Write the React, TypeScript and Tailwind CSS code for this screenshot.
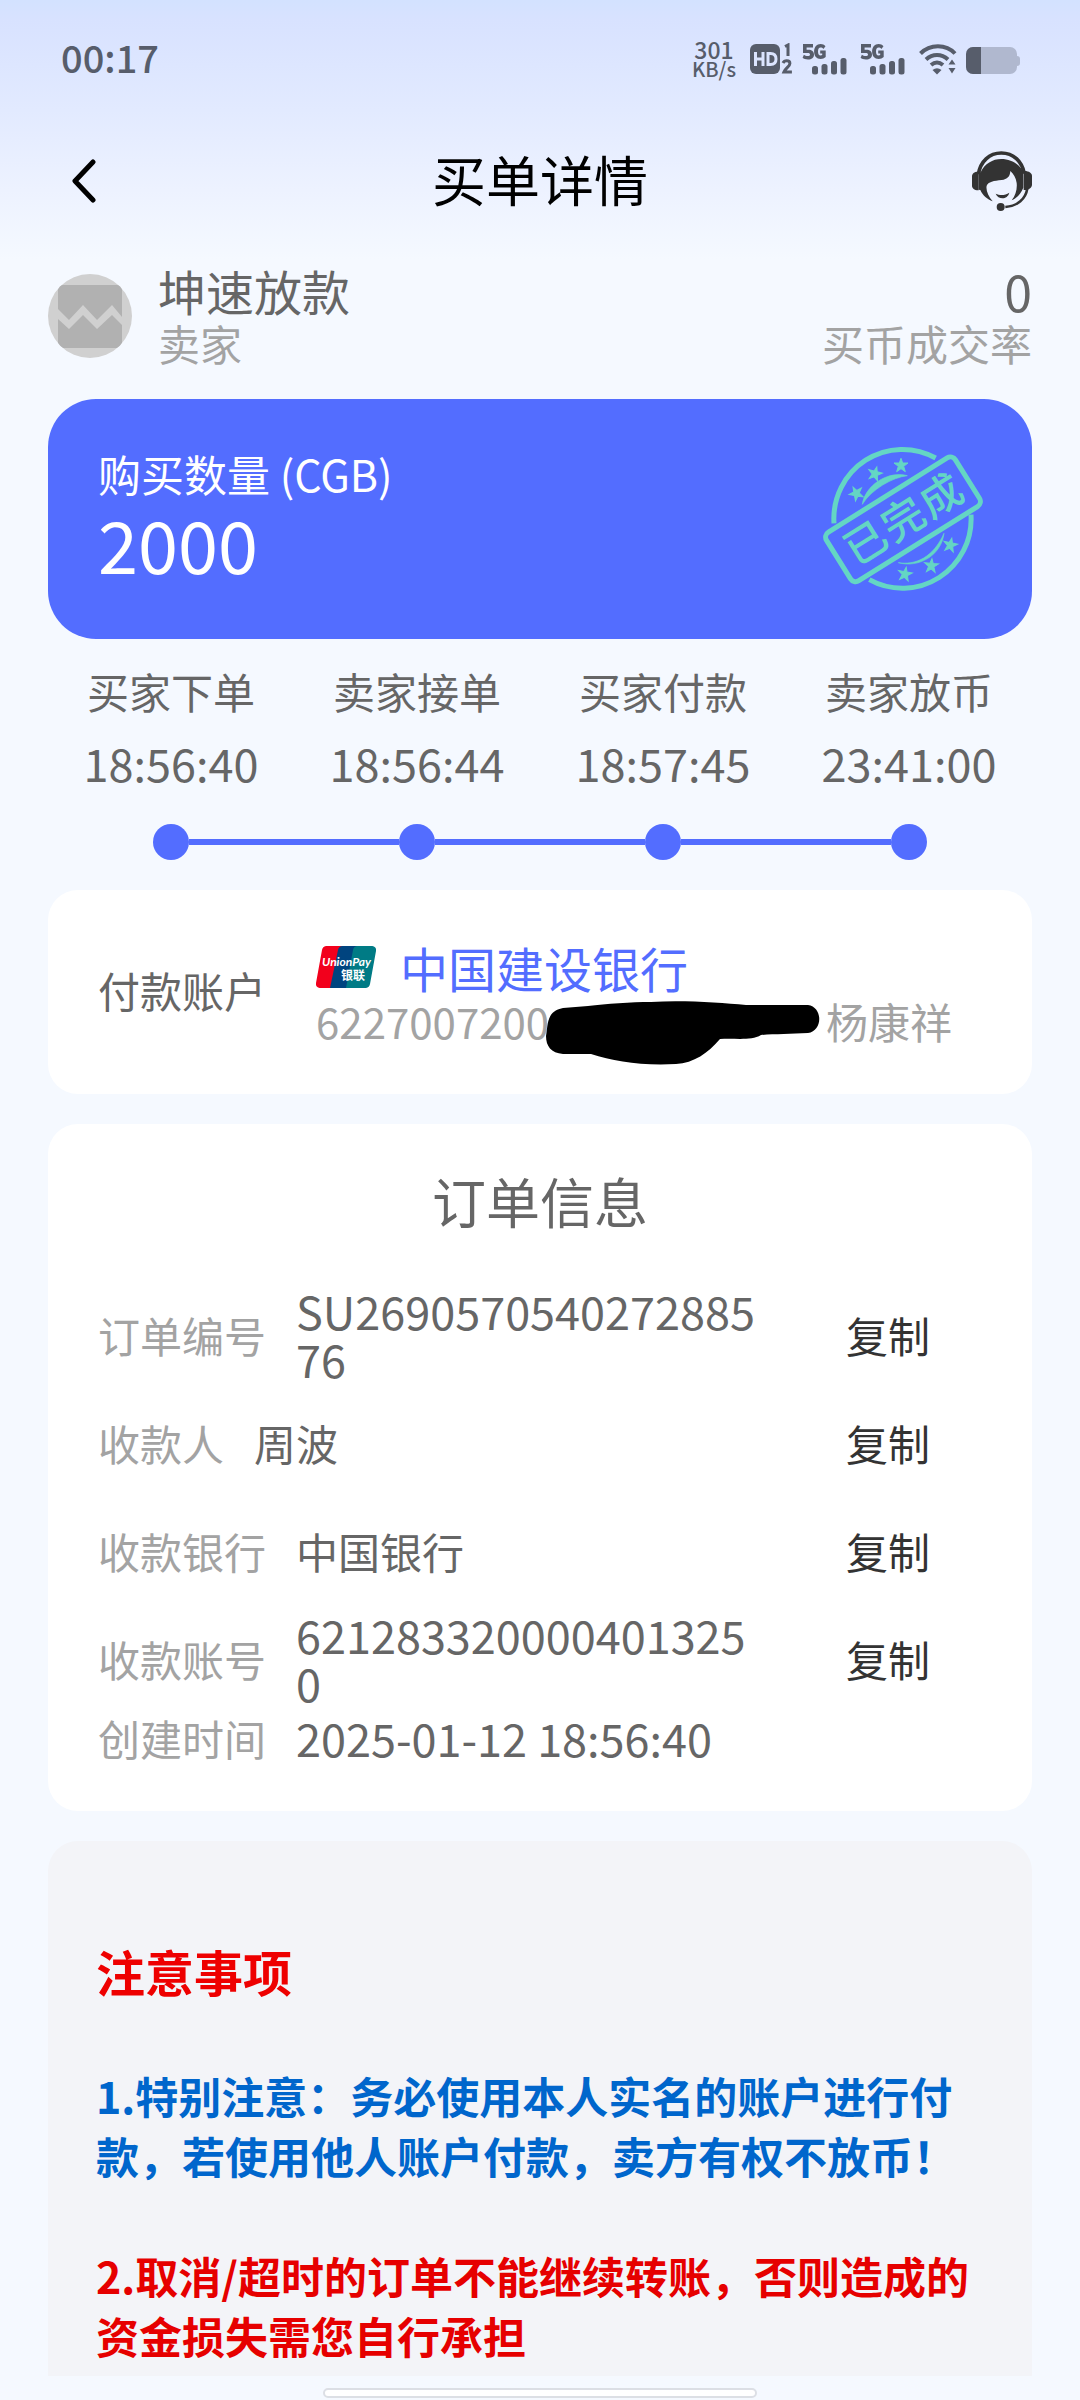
import React from "react";

const steps = [
  { label: "买家下单", time: "18:56:40" },
  { label: "卖家接单", time: "18:56:44" },
  { label: "买家付款", time: "18:57:45" },
  { label: "卖家放币", time: "23:41:00" },
];

const orderRows = [
  { label: "订单编号", value: "SU269057054027288576", numeric: true },
  { label: "收款人", value: "周波", numeric: false },
  { label: "收款银行", value: "中国银行", numeric: false },
  { label: "收款账号", value: "6212833200004013250", numeric: true },
];

function Signal() {
  return (
    <svg viewBox="0 0 46 32" className="h-8 w-[46px]" fill="#575d6b" aria-hidden="true">
      <path d="M1 1h10v3.4H4.6v2.4h1.8c3.4 0 5.6 1.7 5.6 4.7 0 3.2-2.3 5-6 5-2.5 0-4.3-.7-5.4-1.7l1.3-3.1c1 .8 2.3 1.3 3.8 1.3 1.4 0 2.3-.5 2.3-1.6 0-1-.8-1.5-2.3-1.5H1z" />
      <path d="M23.5 3.2 21.4 6c-.8-1-1.7-1.4-2.8-1.4-1.7 0-2.6 1.6-2.6 4s.9 4 2.5 4c.8 0 1.3-.2 1.7-.5v-1.5h-2V7.5h5.500v6.600c-1.300 1.300-3.100 2-5.100 2-4 0-6.500-2.900-6.500-7.500S14.700 1 18.600 1c2 0 3.700.7 4.900 2.200z" />
      <rect x="10" y="23" width="6" height="8.500" rx="2.500" />
      <rect x="19.500" y="21" width="6" height="10.500" rx="2.500" />
      <rect x="29" y="18" width="6" height="13.500" rx="2.500" />
      <rect x="38.500" y="15" width="6" height="16.500" rx="2.500" />
    </svg>
  );
}

function StatusBar() {
  return (
    <div className="flex h-[118px] items-center justify-between pl-[61px] pr-[60px] text-[#575d6b]">
      <span className="pb-1 text-[38px] leading-[48px] font-medium">00:17</span>
      <div className="flex items-center">
        <div className="mr-[14px] flex flex-col items-center font-medium">
          <span className="text-[23px] leading-[20px]">301</span>
          <span className="text-[20px] leading-[20px]">KB/s</span>
        </div>
        <svg viewBox="0 0 44 32" className="mr-2 h-8 w-11" aria-hidden="true">
          <rect x="0" y="1" width="30" height="30" rx="6" fill="#575d6b" />
          <path d="M5.500 9v14M13 9v14M5.500 16H13M18 10.500v11h2.500c4 0 5.500-2 5.500-5.500s-1.500-5.500-5.500-5.500z" fill="none" stroke="#dce5ff" strokeWidth="3" />
          <path d="M35 3.500l3-1.500v11M33 20c.8-1.700 2-2.300 3.700-2.300 2 0 3.200 1 3.200 2.700 0 3-4.500 4.800-6 8.600h8" fill="none" stroke="#575d6b" strokeWidth="3" />
        </svg>
        <Signal />
        <span className="w-3" />
        <Signal />
        <svg viewBox="0 0 40 32" className="ml-3 h-8 w-10" fill="none" stroke="#575d6b" strokeWidth="4" aria-hidden="true">
          <path d="M2.500 10.500C12 .8 28 .8 37 10.500M8 16.500c6.500-6 15.500-6 22 0M13 22c4-3.400 8-3.400 12 0" />
          <path d="M14.500 27c3-2.200 6-2.200 9 0L19 31.500z" fill="#575d6b" stroke="none" />
          <path d="M30.500 21.500 34 16.500l3.500 5zM30.500 25h7L34 30.500z" fill="#575d6b" stroke="none" />
        </svg>
        <svg viewBox="0 0 54 28" className="mt-[3px] ml-2 h-7 w-[54px]" aria-hidden="true">
          <path d="M7 0h37a7 7 0 0 1 7 7v2a3 3 0 0 1 3 3v4a3 3 0 0 1-3 3v1a7 7 0 0 1-7 7H7a7 7 0 0 1-7-7V7a7 7 0 0 1 7-7z" fill="#b0b8cf" />
          <path d="M15 0v27H7a7 7 0 0 1-7-7V7a7 7 0 0 1 7-7z" fill="#575d6b" />
        </svg>
      </div>
    </div>
  );
}

function Headset() {
  return (
    <svg viewBox="0 0 180 180" className="size-[60px]" fill="#333333" aria-hidden="true">
      <path d="M19 70C25 31 52 6 88 6s62 25 69 62" fill="none" stroke="#333333" strokeWidth="11" />
      <path d="M20 62v56C8 119 0 112 0 104V75c0-8 8-14 20-13z" />
      <path d="M155 60c15-1 25 6 25 15v26c0 9-9 16-25 16z" />
      <path d="M20 116V64h6C38 38 62 24 88 24c30 0 54 16 66 38v48c-9 20-20 32-35 38 12-14 17-34 15-52-2-16-10-28-19-36-1 17-9 25-26 27-23 2-41 6-45 17-3 14 5 32 18 47-16-6-30-18-37-34z" />
      <path d="M71 128c12 6 28 6 41-3-5 21-33 22-41 3z" />
      <path d="M166 112c-5 32-29 53-66 56" fill="none" stroke="#333333" strokeWidth="8" />
      <circle cx="86" cy="168" r="12" />
    </svg>
  );
}

function AvatarPlaceholder() {
  return (
    <svg viewBox="0 0 84 84" className="size-[84px] shrink-0 rounded-full bg-[#d0d0d0]" fill="#b1b1b1" role="img" aria-label="卖家头像">
      <path d="M15 11h54a5 5 0 0 1 5 5v27L64 31 49 46 35 31 21 46 10 35V16a5 5 0 0 1 5-5z" />
      <path d="M10 45l11 10 14-14 14 14 15-14 10 10v18a5 5 0 0 1-5 5H15a5 5 0 0 1-5-5z" />
    </svg>
  );
}

const stars = [
  [229, 760, -28],
  [285, 701, 15],
  [363, 676, 0],
  [375, 1002, 10],
  [454, 977, 5],
  [511, 915, 12],
];

function Stamp() {
  return (
    <svg viewBox="120 615 498 444" className="h-[148px] w-[166px]" fill="none" stroke="#64d6c4" aria-label="已完成">
      <path d="M162 850A206 208 0 0 1 467 654M573 824A206 208 0 0 1 268 1019" strokeWidth="15" />
      <g transform="rotate(-32 369 838)">
        <rect x="141" y="752" width="456" height="172" rx="18" strokeWidth="15" />
        <text x="174 307 440" y="884" fontSize="126" fill="#64d6c4" stroke="none" className="font-medium">
          已完成
        </text>
      </g>
      <path d="M247 793c8-56 76-102 135-86-44 5-108 41-135 86zM355 968c50 8 104-14 137-88-8 66-75 105-137 88z" fill="#64d6c4" strokeWidth="2" />
      {stars.map(([x, y, r]) => (
        <path
          key={x}
          transform={`translate(${x} ${y}) rotate(${r})`}
          d="M0-21 5-7h16L8 3l5 16L0 10l-13 9 5-16L-21-7h16z"
          fill="#64d6c4"
          strokeWidth="3"
        />
      ))}
    </svg>
  );
}

function UnionPay() {
  return (
    <svg viewBox="0 0 60 42" className="h-[42px] w-[60px]" role="img" aria-label="UnionPay 银联">
      <path d="M10 0h16l-9 42H4a4 4 0 0 1-4-5L6 4a5 5 0 0 1 4-4z" fill="#f2001c" />
      <path d="M26 0h17l-9 42H14l8-38a5 5 0 0 1 4-4z" fill="#00447f" />
      <path d="M41 0h15a4 4 0 0 1 4 5l-6 33a5 5 0 0 1-4 4H30l7-38a5 5 0 0 1 4-4z" fill="#007b85" />
      <text x="6" y="20" fontSize="12" fill="#fff" className="font-['Lato'] font-bold italic">UnionPay</text>
      <text x="25" y="34" fontSize="12" fill="#fff" className="font-bold">银联</text>
    </svg>
  );
}

function Redaction() {
  return (
    <svg viewBox="0 0 274 64" className="absolute top-[5px] left-[230px] h-16 w-[274px]" aria-hidden="true">
      <path d="M42 5 C60 3 85 1 105 1 C140-1 175 2 200 4 L262 4 C277 6 277 30 262 32 C245 33 228 33 215 34 C205 40 190 37 174 38 C162 52 148 62 130 63 C95 65 68 60 45 53 L17 53 C5 52 0 45 0 35 C2 25 0 10 17 7 Z" fill="#000" />
    </svg>
  );
}

export default function App() {
  return (
    <div className="flex min-h-screen flex-col bg-[#f5f9ff] bg-[linear-gradient(180deg,#d3e2ff_0px,#d8e2ff_20px,#e2eaff_110px,#edf2ff_190px,#f5f9ff_260px)] font-['Noto_Sans_CJK_SC',sans-serif] text-[42px] leading-[50px] text-[#666666]">
      <StatusBar />

      <header className="grid h-[126px] grid-cols-[1fr_auto_1fr] items-center px-12 text-black">
        <button type="button" aria-label="返回" className="flex size-[72px] items-center justify-center">
          <svg viewBox="0 0 24 44" className="h-11 w-6" fill="none" stroke="#000" strokeWidth="5" strokeLinecap="round" strokeLinejoin="round" aria-hidden="true">
            <path d="M21 3 3 22l18 19" />
          </svg>
        </button>
        <h1 className="pb-1 text-[54px] leading-[64px]">买单详情</h1>
        <button type="button" aria-label="客服" className="justify-self-end">
          <Headset />
        </button>
      </header>

      <main className="flex flex-1 flex-col px-12">
        <section className="mt-4 flex items-center">
          <AvatarPlaceholder />
          <div className="ml-[26px] pt-[2px] pb-1">
            <p className="text-[48px] leading-[56px]">坤速放款</p>
            <p className="text-[#a3a3a3]">卖家</p>
          </div>
          <div className="ml-auto pt-[2px] pb-1 text-right">
            <p className="text-[50px] leading-[56px]">0</p>
            <p className="text-[#a3a3a3]">买币成交率</p>
          </div>
        </section>

        <section className="mt-[27px] flex items-center justify-between rounded-[48px] bg-[#536dff] py-[46px] pr-[46px] pl-[50px] text-white">
          <div className="pb-2">
            <p className="text-[43px] leading-[56px]">购买数量 (CGB)</p>
            <p className="text-[72px] leading-[84px]">2000</p>
          </div>
          <Stamp />
        </section>

        <ol className="mt-[27px] grid grid-cols-4">
          {steps.map((step, i) => (
            <li key={step.label} className="flex flex-col items-center">
              <span>{step.label}</span>
              <time className="mt-[22px] text-[45px]">{step.time}</time>
              <div className="mt-9 flex w-full items-center">
                <span className={i === 0 ? "h-[6px] flex-1" : "h-[6px] flex-1 bg-[#536dff]"} />
                <span className="size-9 rounded-full bg-[#536dff]" />
                <span className={i === 3 ? "h-[6px] flex-1" : "h-[6px] flex-1 bg-[#536dff]"} />
              </div>
            </li>
          ))}
        </ol>

        <section className="mt-[30px] flex items-center rounded-[30px] bg-white px-[50px] py-[48px]">
          <h2 className="pb-1">付款账户</h2>
          <div className="ml-[50px]">
            <div className="flex items-center">
              <UnionPay />
              <span className="ml-6 text-[48px] leading-[58px] text-[#536dff]">中国建设银行</span>
            </div>
            <div className="relative flex text-[#a3a3a3]">
              <span className="w-[510px]">6227007200</span>
              <span>杨康祥</span>
              <Redaction />
            </div>
          </div>
        </section>

        <section className="mt-[30px] rounded-[30px] bg-white px-[50px] pt-[45px] pb-12">
          <h2 className="text-center text-[54px] leading-[64px]">订单信息</h2>
          <dl className="mt-12">
            {orderRows.map((row) => (
              <div key={row.label} className="flex h-[108px] items-center">
                <dt className="shrink-0 text-[#a3a3a3]">{row.label}</dt>
                <dd className="ml-[30px] flex flex-1 items-center gap-8">
                  <span className={row.numeric ? "flex-1 text-[45px] leading-[48px] break-all" : "flex-1"}>{row.value}</span>
                  <button type="button" aria-label={`复制${row.label}`} className="w-[188px] text-[#333333]">
                    复制
                  </button>
                </dd>
              </div>
            ))}
            <div className="flex items-center">
              <dt className="text-[#a3a3a3]">创建时间</dt>
              <dd className="ml-[30px] text-[45px]">2025-01-12 18:56:40</dd>
            </div>
          </dl>
        </section>

        <section className="mt-[30px] flex-1 rounded-t-[30px] bg-[#f3f4f8] px-12 pt-[100px] pb-2 text-[43px] leading-[60px] font-bold">
          <h2 className="text-[49px] text-[#ee0000]">注意事项</h2>
          <p className="mt-16 text-[#0066cc]">1.特别注意：务必使用本人实名的账户进行付款，若使用他人账户付款，卖方有权不放币！</p>
          <p className="mt-[60px] text-[#e60000]">2.取消/超时的订单不能继续转账，否则造成的资金损失需您自行承担</p>
        </section>
      </main>

      <footer className="flex h-6 items-end justify-center pb-[2px]">
        <span className="h-[10px] w-[434px] rounded-full border-2 border-[#dcdfe5] bg-white" />
      </footer>
    </div>
  );
}
